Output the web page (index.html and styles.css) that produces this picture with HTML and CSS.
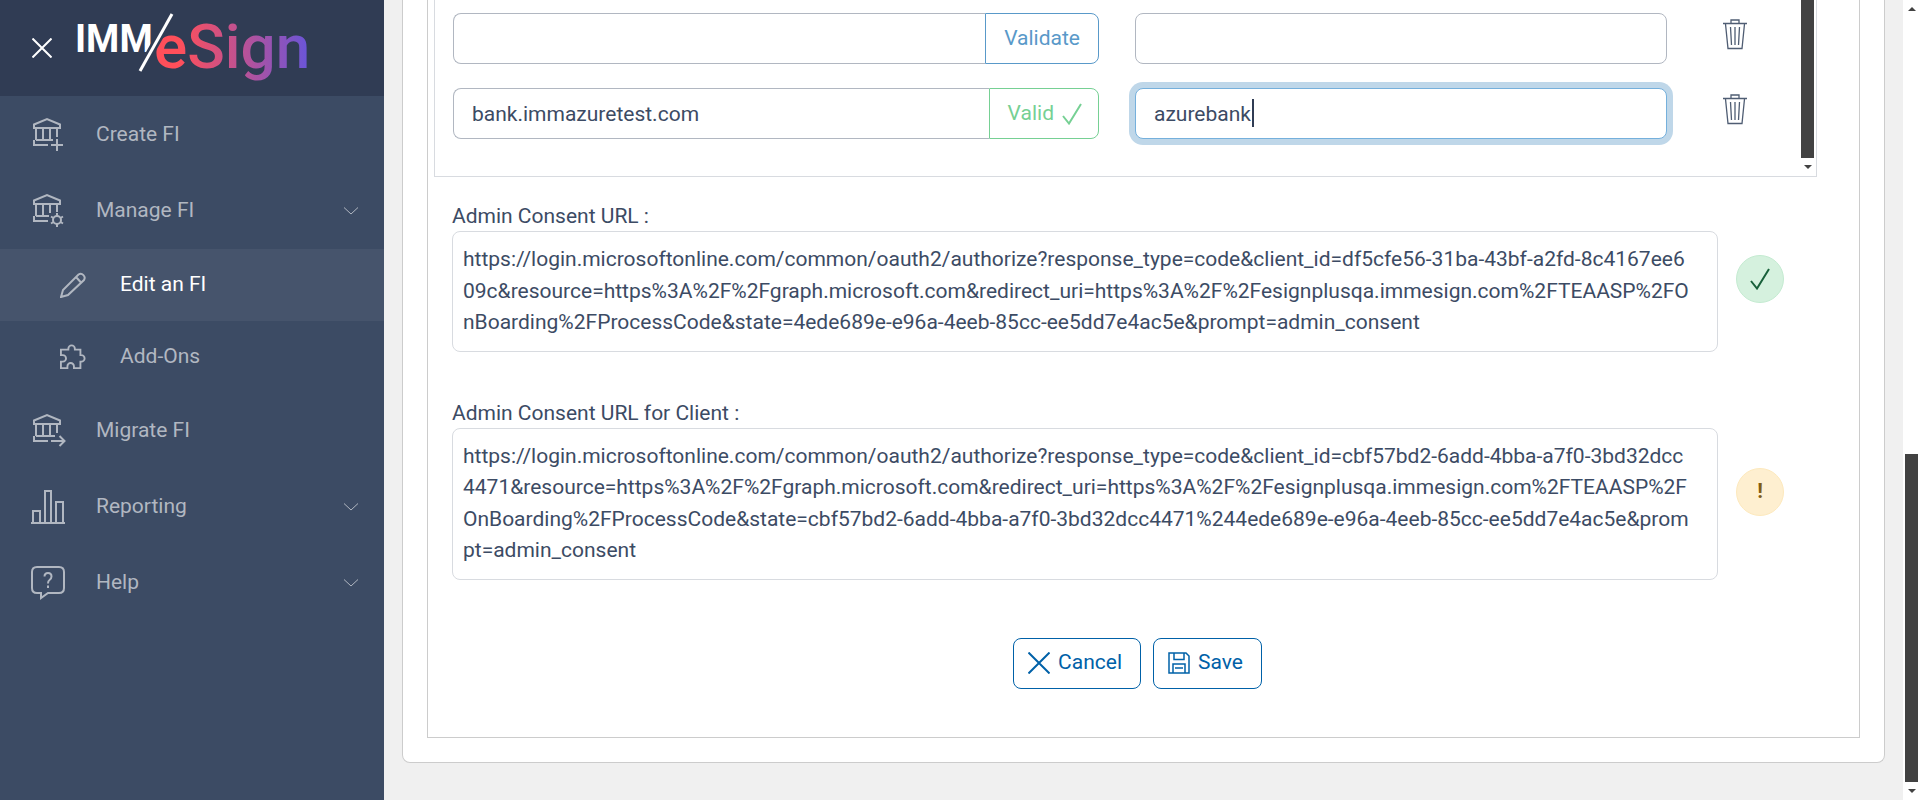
FILE: index.html
```html
<!DOCTYPE html>
<html lang="en">
<head>
  <meta charset="UTF-8">
  <meta name="viewport" content="width=device-width, initial-scale=1.0">
  <title>IMM eSign - Edit an FI</title>
  <link rel="stylesheet" href="styles.css">
</head>
<body>

<!-- Sidebar -->
<aside class="sidebar">
  <div class="sidebar-header">
    <button type="button" class="close-menu" aria-label="Close menu">
      <svg width="20" height="20" viewBox="0 0 20 20"><path d="M0.5 0.5 L19.5 19.5 M19.5 0.5 L0.5 19.5"/></svg>
    </button>
    <svg class="logo" width="240" height="80" viewBox="0 0 240 80">
      <defs>
        <linearGradient id="logo-gradient" gradientUnits="userSpaceOnUse" x1="84" y1="0" x2="236" y2="0">
          <stop offset="0.15" stop-color="#ff4f5a"/>
          <stop offset="0.6" stop-color="#b5529a"/>
          <stop offset="1" stop-color="#6a55d8"/>
        </linearGradient>
      </defs>
      <text class="logo-imm" x="3" y="48">IMM</text>
      <text class="logo-esign" x="82" y="64" fill="url(#logo-gradient)">eSign</text>
      <path class="logo-cut" d="M68 67 L100 10"/>
      <path class="logo-slash" d="M68 67 L100 10"/>
    </svg>
  </div>

  <nav>
    <ul class="menu">
      <li>
        <a href="#" class="menu-link">
          <svg class="icon" width="36" height="36" viewBox="0 0 36 36"><path d="M4 11 V7.5 L17 2 L30 7.5 V11 Z M6 11 V23 M13 11 V23 M20 11 V23 M27 11 V20 M6 23 H23 M4 23 V28 H18 M27 22 V34 M21 28 H33"/></svg>
          Create FI
        </a>
      </li>
      <li>
        <a href="#" class="menu-link">
          <svg class="icon" width="36" height="36" viewBox="0 0 36 36"><path d="M4 11 V7.5 L17 2 L30 7.5 V11 Z M6 11 V23 M13 11 V23 M20 11 V20 M27 11 V19 M6 23 H19 M4 23 V28 H18"/><circle cx="27" cy="27" r="4"/><path d="M27 20 V23 M27 31 V34 M21 23.5 L23.5 25 M30.5 29 L33 30.5 M21 30.5 L23.5 29 M30.5 25 L33 23.5"/></svg>
          Manage FI
          <svg class="chevron" width="14" height="8" viewBox="0 0 14 8"><path d="M0 0.5 L7 7 L14 0.5"/></svg>
        </a>
        <ul class="submenu">
          <li>
            <a href="#" class="menu-link active">
              <svg class="icon" width="26" height="26" viewBox="0 0 26 26"><path d="M1 25 L3 18 L18.5 2.5 A4 4 0 0 1 24 8 L8 23 Z M16 5 L21 10.5"/></svg>
              Edit an FI
            </a>
          </li>
          <li>
            <a href="#" class="menu-link">
              <svg class="icon" width="28" height="28" viewBox="0 0 28 28"><path d="M1 6 H9 V5 A3.5 3.5 0 0 1 16 5 V6 H22 V12 H23 A3.5 3.5 0 0 1 23 19 H22 V26 H15 V24 A3.5 3.5 0 0 0 8 24 V26 H1 V19 H3 A3.5 3.5 0 0 0 3 12 H1 Z"/></svg>
              Add-Ons
            </a>
          </li>
        </ul>
      </li>
      <li>
        <a href="#" class="menu-link">
          <svg class="icon" width="36" height="36" viewBox="0 0 36 36"><path d="M4 11 V7.5 L17 2 L30 7.5 V11 Z M6 11 V23 M13 11 V23 M20 11 V23 M27 11 V20 M6 23 H25 M4 23 V28 H18 M21 28 H34 M29.5 23 L34.5 28 L29.5 33"/></svg>
          Migrate FI
        </a>
      </li>
      <li>
        <a href="#" class="menu-link">
          <svg class="icon" width="36" height="36" viewBox="0 0 36 36"><path d="M1 34 H35 M3 34 V22 H10 V34 M15 34 V2 H21 V34 M26 34 V13 H33 V34"/></svg>
          Reporting
          <svg class="chevron" width="14" height="8" viewBox="0 0 14 8"><path d="M0 0.5 L7 7 L14 0.5"/></svg>
        </a>
      </li>
      <li>
        <a href="#" class="menu-link">
          <svg class="icon" width="36" height="36" viewBox="0 0 36 36"><path d="M7 2 H29 Q34 2 34 7 V23 Q34 28 29 28 H18 L11 33 V28 H7 Q2 28 2 23 V7 Q2 2 7 2 Z M14.5 11.5 Q14.5 8 18 8 Q21.5 8 21.5 11.5 Q21.5 13.5 19.5 15 Q18 16 18 18.5 M18 20.5 V23"/></svg>
          Help
          <svg class="chevron" width="14" height="8" viewBox="0 0 14 8"><path d="M0 0.5 L7 7 L14 0.5"/></svg>
        </a>
      </li>
    </ul>
  </nav>
</aside>

<!-- Content -->
<main class="content">
  <div class="card">
    <form class="panel">

      <div class="domains">
        <div class="domain-list">
          <div class="domain-row">
            <div class="input-group">
              <input type="text" aria-label="Domain">
              <button type="button" class="validate">Validate</button>
            </div>
            <input type="text" aria-label="Domain name">
            <button type="button" class="delete" aria-label="Delete domain">
              <svg width="26" height="32" viewBox="0 0 26 32"><path d="M1 5.5 H25 M9 5 V2 H17 V5 M3.5 6 L6 30.5 H20 L22.5 6 M8.5 9 L9.5 27 M13 9 V27 M17.5 9 L16.5 27"/></svg>
            </button>
          </div>
          <div class="domain-row">
            <div class="input-group">
              <input type="text" value="bank.immazuretest.com" aria-label="Domain">
              <button type="button" class="validate valid">Valid
                <svg width="20" height="22" viewBox="0 0 20 22"><path d="M1 13 L7 20.5 L19 1"/></svg>
              </button>
            </div>
            <div class="focused">
              <input type="text" value="azurebank" aria-label="Domain name">
              <span class="caret"></span>
            </div>
            <button type="button" class="delete" aria-label="Delete domain">
              <svg width="26" height="32" viewBox="0 0 26 32"><path d="M1 5.5 H25 M9 5 V2 H17 V5 M3.5 6 L6 30.5 H20 L22.5 6 M8.5 9 L9.5 27 M13 9 V27 M17.5 9 L16.5 27"/></svg>
            </button>
          </div>
        </div>
        <div class="scrollbar">
          <div class="thumb"></div>
          <span class="arrow-down"></span>
        </div>
      </div>

      <div class="consent">
        <div class="field">
          <label for="consent-url">Admin Consent URL :</label>
          <textarea id="consent-url" rows="3" readonly>https://login.microsoftonline.com/common/oauth2/authorize?response_type=code&amp;client_id=df5cfe56-31ba-43bf-a2fd-8c4167ee6
09c&amp;resource=https%3A%2F%2Fgraph.microsoft.com&amp;redirect_uri=https%3A%2F%2Fesignplusqa.immesign.com%2FTEAASP%2FO
nBoarding%2FProcessCode&amp;state=4ede689e-e96a-4eeb-85cc-ee5dd7e4ac5e&amp;prompt=admin_consent</textarea>
        </div>
        <span class="status ok">
          <svg width="20" height="22" viewBox="0 0 20 22"><path d="M1 13 L7 20.5 L19 1"/></svg>
        </span>
      </div>

      <div class="consent">
        <div class="field">
          <label for="client-consent-url">Admin Consent URL for Client :</label>
          <textarea id="client-consent-url" rows="4" readonly>https://login.microsoftonline.com/common/oauth2/authorize?response_type=code&amp;client_id=cbf57bd2-6add-4bba-a7f0-3bd32dcc
4471&amp;resource=https%3A%2F%2Fgraph.microsoft.com&amp;redirect_uri=https%3A%2F%2Fesignplusqa.immesign.com%2FTEAASP%2F
OnBoarding%2FProcessCode&amp;state=cbf57bd2-6add-4bba-a7f0-3bd32dcc4471%244ede689e-e96a-4eeb-85cc-ee5dd7e4ac5e&amp;prom
pt=admin_consent</textarea>
        </div>
        <span class="status warning">!</span>
      </div>

      <div class="actions">
        <button type="button" class="btn">
          <svg width="22" height="22" viewBox="0 0 22 22"><path d="M0.5 0.5 L21.5 21.5 M21.5 0.5 L0.5 21.5"/></svg>
          Cancel
        </button>
        <button type="button" class="btn">
          <svg class="save-icon" width="22" height="22" viewBox="0 0 22 22"><path d="M1 1 H18 L21 4 V21 H1 Z M6 1 V7.5 H16 V1 M5 21 V12 H17 V21 M7 16 H15"/></svg>
          Save
        </button>
      </div>

    </form>
  </div>
</main>

<div class="scrollbar page-scrollbar">
  <span class="arrow-up"></span>
  <div class="thumb"></div>
  <span class="arrow-down"></span>
</div>

</body>
</html>
```
FILE: styles.css
```css
* {
  box-sizing: border-box;
}
body {
  display: flex;
  height: 100vh;
  margin: 0;
  overflow: hidden;
  font-family: Roboto, sans-serif;
  font-size: 21px;
  line-height: 1.5;
  color: #3c4b64;
  background-color: #f0f0f0;
}
ul {
  list-style: none;
  margin: 0;
  padding: 0;
}
svg {
  fill: none;
  stroke: currentColor;
  stroke-width: 2;
  flex-shrink: 0;
}
input, textarea, button {
  font: inherit;
  color: inherit;
  background: #fff;
}
button {
  cursor: pointer;
}

/* Sidebar */
.sidebar {
  flex: 0 0 384px;
  background-color: #3c4b64;
}
.sidebar-header {
  display: flex;
  height: 96px;
  padding-left: 32px;
  background-color: #303c54;
}
.close-menu {
  display: flex;
  align-items: center;
  padding: 0;
  border: none;
  background: none;
  color: #fff;
}
.logo {
  margin: 4px 0 0 20px;
}
.logo text {
  stroke: none;
}
.logo-imm {
  font-size: 38px;
  font-weight: 700;
  fill: #fff;
}
.logo-esign {
  font-size: 62px;
  font-weight: 500;
}
.logo-cut {
  stroke: #303c54;
  stroke-width: 8;
}
.logo-slash {
  stroke: #fff;
  stroke-width: 3;
}
.menu {
  padding-top: 1px;
}
.menu-link {
  display: flex;
  align-items: center;
  height: 76px;
  padding: 0 26px 0 30px;
  color: #b1b7c1;
  text-decoration: none;
}
.menu-link .icon {
  margin-right: 30px;
}
.menu-link .chevron {
  margin-left: auto;
  stroke-width: 1;
}
.submenu .menu-link {
  height: 72px;
  padding-left: 60px;
}
.submenu .icon {
  width: 26px;
  margin-right: 34px;
}
.submenu .active {
  color: #fff;
  background-color: #46546c;
}
.active .icon {
  color: #b1b7c1;
}

/* Card */
.content {
  flex: 1;
  min-width: 0;
  padding: 0 18px;
}
.card {
  padding: 0 24px 24px;
  background: #fff;
  border: 1px solid #ccc;
  border-top: none;
  border-radius: 0 0 8px 8px;
}
.panel {
  padding-bottom: 48px;
  border: 1px solid #ccc;
  border-top: none;
}

/* Domains */
.domains {
  display: flex;
  margin: 0 42px 0 6px;
  border: 1px solid #d8dbe0;
  border-top: none;
}
.domain-list {
  flex: 1;
  display: flex;
  flex-direction: column;
  gap: 24px;
  padding: 13px 0 37px 18px;
}
.domain-row {
  display: grid;
  grid-template-columns: 17fr 14fr 96px;
  gap: 36px;
  align-items: center;
}
.domain-row input {
  width: 100%;
  min-width: 0;
  height: 51px;
  padding: 0 18px;
  border: 1px solid #b1b7c1;
  border-radius: 8px;
  outline: none;
}
.input-group {
  display: flex;
}
.input-group input {
  flex: 1;
  border-right: none;
  border-radius: 8px 0 0 8px;
}
.validate {
  display: flex;
  align-items: center;
  gap: 8px;
  padding: 0 18px;
  border: 1px solid #5999c9;
  border-radius: 0 8px 8px 0;
  color: #5999c9;
}
.valid {
  padding-right: 16px;
  border-color: #76d094;
  color: #76d094;
}
.focused {
  position: relative;
}
.focused input {
  display: block;
  border-color: #75b0dc;
  box-shadow: 0 0 0 6px #bfd7e9;
}
.caret {
  position: absolute;
  left: 117px;
  top: 11px;
  width: 2px;
  height: 28px;
  background: #303c54;
}
.delete {
  justify-self: start;
  display: flex;
  margin: 0 0 10px 19px;
  padding: 0;
  border: none;
  color: #4f5d73;
}
.delete svg {
  stroke-width: 1.3;
}

/* Scrollbars */
.scrollbar {
  display: flex;
  flex-direction: column;
  align-items: center;
  width: 17px;
  background: #fff;
}
.thumb {
  flex: 1;
  width: 13px;
  background: #424242;
}
.arrow-up, .arrow-down {
  margin: 7px 0;
  border: 4px solid transparent;
}
.arrow-up {
  border-top: none;
  border-bottom-color: #424242;
}
.arrow-down {
  border-bottom: none;
  border-top-color: #424242;
}
.page-scrollbar {
  justify-content: space-between;
}
.page-scrollbar .thumb {
  flex: 0 0 41%;
  margin-top: auto;
}

/* Consent URLs */
.consent {
  display: flex;
  align-items: center;
  gap: 18px;
  margin: 24px 75px 46px 24px;
}
.field {
  flex: 1;
}
.field label {
  display: block;
  line-height: 30px;
}
.field textarea {
  display: block;
  width: 100%;
  padding: 12px 10px;
  border: 1px solid #d8dbe0;
  border-radius: 8px;
  outline: none;
  resize: none;
  overflow: hidden;
  word-break: break-all;
}
.status {
  display: flex;
  align-items: center;
  justify-content: center;
  width: 48px;
  height: 48px;
  margin-top: 6px;
  border-radius: 50%;
}
.ok {
  color: #18603a;
  background: #d5f1de;
  border: 1px solid #c4ebd1;
}
.warning {
  color: #815c15;
  background: #feefd0;
  border: 1px solid #fde9bd;
  font-weight: 700;
}

/* Buttons */
.actions {
  display: flex;
  justify-content: center;
  margin-top: 58px;
}
.btn {
  display: flex;
  align-items: center;
  gap: 8px;
  height: 51px;
  margin-right: 12px;
  padding: 0 18px 0 14px;
  border: 1px solid #0061a8;
  border-radius: 8px;
  color: #0061a8;
}
.save-icon {
  stroke-width: 1.5;
}
```
